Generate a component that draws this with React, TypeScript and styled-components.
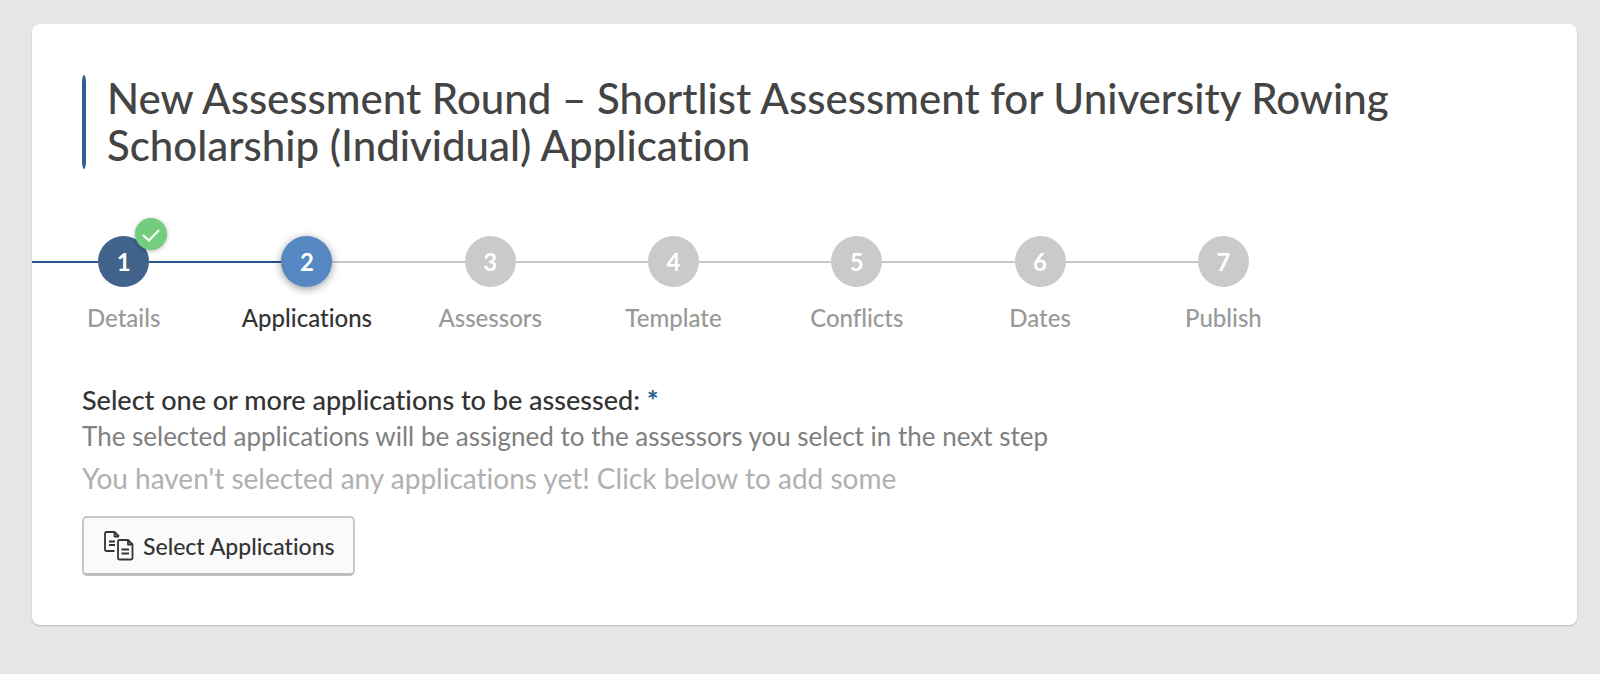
import React from "react";
import styled, { createGlobalStyle } from "styled-components";

const GlobalStyle = createGlobalStyle`
  *, *::before, *::after { box-sizing: border-box; }
  html { background: #e6e6e6; }
  body {
    margin: 0;
    font-family: Lato, "Liberation Sans", sans-serif;
    font-variant-ligatures: none;
    color: #333;
  }
`;

const Page = styled.main`
  padding: 24px 23px 48px 32px;
`;

const Card = styled.section`
  padding: 51px 0 49px;
  background: #fff;
  border-radius: 8px;
  box-shadow: 0 1px 2px rgba(0, 0, 0, 0.2);
`;

const Header = styled.header`
  display: flex;
  gap: 21px;
  margin: 0 51px 0 50px;

  &::before {
    content: "";
    flex: 0 0 4px;
    border-radius: 50%/8px;
    background: #2d5f93;
  }
`;

const Title = styled.h1`
  margin: 0;
  font-size: 42px;
  line-height: 47px;
  font-weight: 500;
  color: #444;
`;

const Steps = styled.ol`
  display: grid;
  grid-template-columns: repeat(7, minmax(0, 1fr));
  max-width: 1283px;
  margin: 67px 0 0;
  padding: 0;
  list-style: none;
`;

type Status = "done" | "current" | "upcoming";

const StepLink = styled.a<{ $status: Status }>`
  display: flex;
  flex-direction: column;
  gap: 16px;
  font-size: 24px;
  line-height: 29px;
  font-weight: 500;
  text-align: center;
  text-decoration: none;
  color: ${(p) => (p.$status === "current" ? "#333" : "#999")};
`;

const Track = styled.span`
  display: grid;
  grid-template-columns: 1fr 51px 1fr;
  align-items: center;
`;

const lineColors = { reached: "#24568c", ahead: "#c8c8c8", none: "transparent" };

const Line = styled.span<{ $kind: keyof typeof lineColors }>`
  height: 2px;
  background: ${(p) => lineColors[p.$kind]};
`;

const circleColors: Record<Status, string> = {
  done: "#41638c",
  current: "#5588c2",
  upcoming: "#cacaca",
};

const Circle = styled.span<{ $status: Status }>`
  position: relative;
  display: flex;
  align-items: center;
  justify-content: center;
  height: 51px;
  border-radius: 50%;
  background: ${(p) => circleColors[p.$status]};
  box-shadow: ${(p) => (p.$status === "current" ? "0 2px 8px rgba(0, 0, 0, 0.4)" : "none")};
  color: #fff;
  font-weight: 700;
`;

const DoneBadge = styled.span`
  position: absolute;
  top: -18px;
  left: 37px;
  display: flex;
  align-items: center;
  justify-content: center;
  width: 32px;
  height: 32px;
  border-radius: 50%;
  background: #74cc7e;
  box-shadow: 0 1px 4px rgba(0, 0, 0, 0.3);
`;

const Field = styled.section`
  margin: 52px 50px 0;
`;

const FieldTitle = styled.h2`
  margin: 0;
  font-size: 27px;
  line-height: 32px;
  font-weight: 500;
  color: #333;
`;

const Required = styled.span`
  color: #2d5f93;
  font-weight: 900;
`;

const Hint = styled.p`
  margin: 4px 0 0;
  font-size: 26px;
  line-height: 32px;
  color: #808080;
`;

const EmptyNote = styled.p`
  margin: 9px 0 0;
  font-size: 28px;
  line-height: 34px;
  color: #b0b0b0;
`;

const SelectButton = styled.button`
  display: flex;
  align-items: center;
  gap: 9px;
  height: 60px;
  margin: 21px 0 0;
  padding: 0 18px 0 20px;
  border: 2px solid #c8c8c8;
  border-bottom: 3px solid #bdbdbd;
  border-radius: 5px;
  background: #fafafa;
  color: #333;
  font: 500 23px/28px Lato, "Liberation Sans", sans-serif;
  font-variant-ligatures: none;
`;

const CheckIcon = () => (
  <svg width="20" height="20" viewBox="0 0 20 20" fill="none" stroke="#fff" strokeWidth="2" aria-hidden="true">
    <path d="M2 11l6 5.500L18 6" />
  </svg>
);

const DocumentsIcon = () => (
  <svg width="30" height="30" viewBox="0 0 30 30" fill="none" stroke="currentColor" strokeWidth="1.8" strokeLinejoin="round" aria-hidden="true">
    <path d="M10.500 20H2.500A1.500 1.500 0 0 1 1 18.500V2.500A1.500 1.500 0 0 1 2.500 1H10.500l4.500 4.500" />
    <path d="M10.500 1v4.500h4.500" />
    <path d="M5 10.500h6M5 14h6" />
    <path d="M15.500 9H24l4.500 4.500v13.500a1.500 1.500 0 0 1-1.500 1.500H15.500a1.500 1.500 0 0 1-1.500-1.500V10.500A1.500 1.500 0 0 1 15.500 9z" />
    <path d="M24 9v4.500h4.500" />
    <path d="M17.500 18.500h7.500M17.500 22.500h7.500" />
  </svg>
);

const steps = ["Details", "Applications", "Assessors", "Template", "Conflicts", "Dates", "Publish"];
const current = 1;

const statusOf = (index: number): Status =>
  index < current ? "done" : index === current ? "current" : "upcoming";

export default function App() {
  return (
    <Page>
      <GlobalStyle />
      <Card>
        <Header>
          <Title>
            New Assessment Round – Shortlist Assessment for University Rowing Scholarship (Individual) Application
          </Title>
        </Header>
        <nav aria-label="Assessment round steps">
          <Steps>
            {steps.map((name, i) => {
              const status = statusOf(i);
              const after = i === steps.length - 1 ? "none" : i < current ? "reached" : "ahead";
              return (
                <li key={name}>
                  <StepLink
                    $status={status}
                    href={`#${name.toLowerCase()}`}
                    aria-current={status === "current" ? "step" : undefined}
                  >
                    <Track>
                      <Line $kind={i <= current ? "reached" : "ahead"} />
                      <Circle $status={status}>
                        {i + 1}
                        {status === "done" && (
                          <DoneBadge>
                            <CheckIcon />
                          </DoneBadge>
                        )}
                      </Circle>
                      <Line $kind={after} />
                    </Track>
                    {name}
                  </StepLink>
                </li>
              );
            })}
          </Steps>
        </nav>
        <Field>
          <FieldTitle>
            Select one or more applications to be assessed: <Required>*</Required>
          </FieldTitle>
          <Hint>The selected applications will be assigned to the assessors you select in the next step</Hint>
          <EmptyNote>You haven't selected any applications yet! Click below to add some</EmptyNote>
          <SelectButton type="button">
            <DocumentsIcon />
            Select Applications
          </SelectButton>
        </Field>
      </Card>
    </Page>
  );
}
